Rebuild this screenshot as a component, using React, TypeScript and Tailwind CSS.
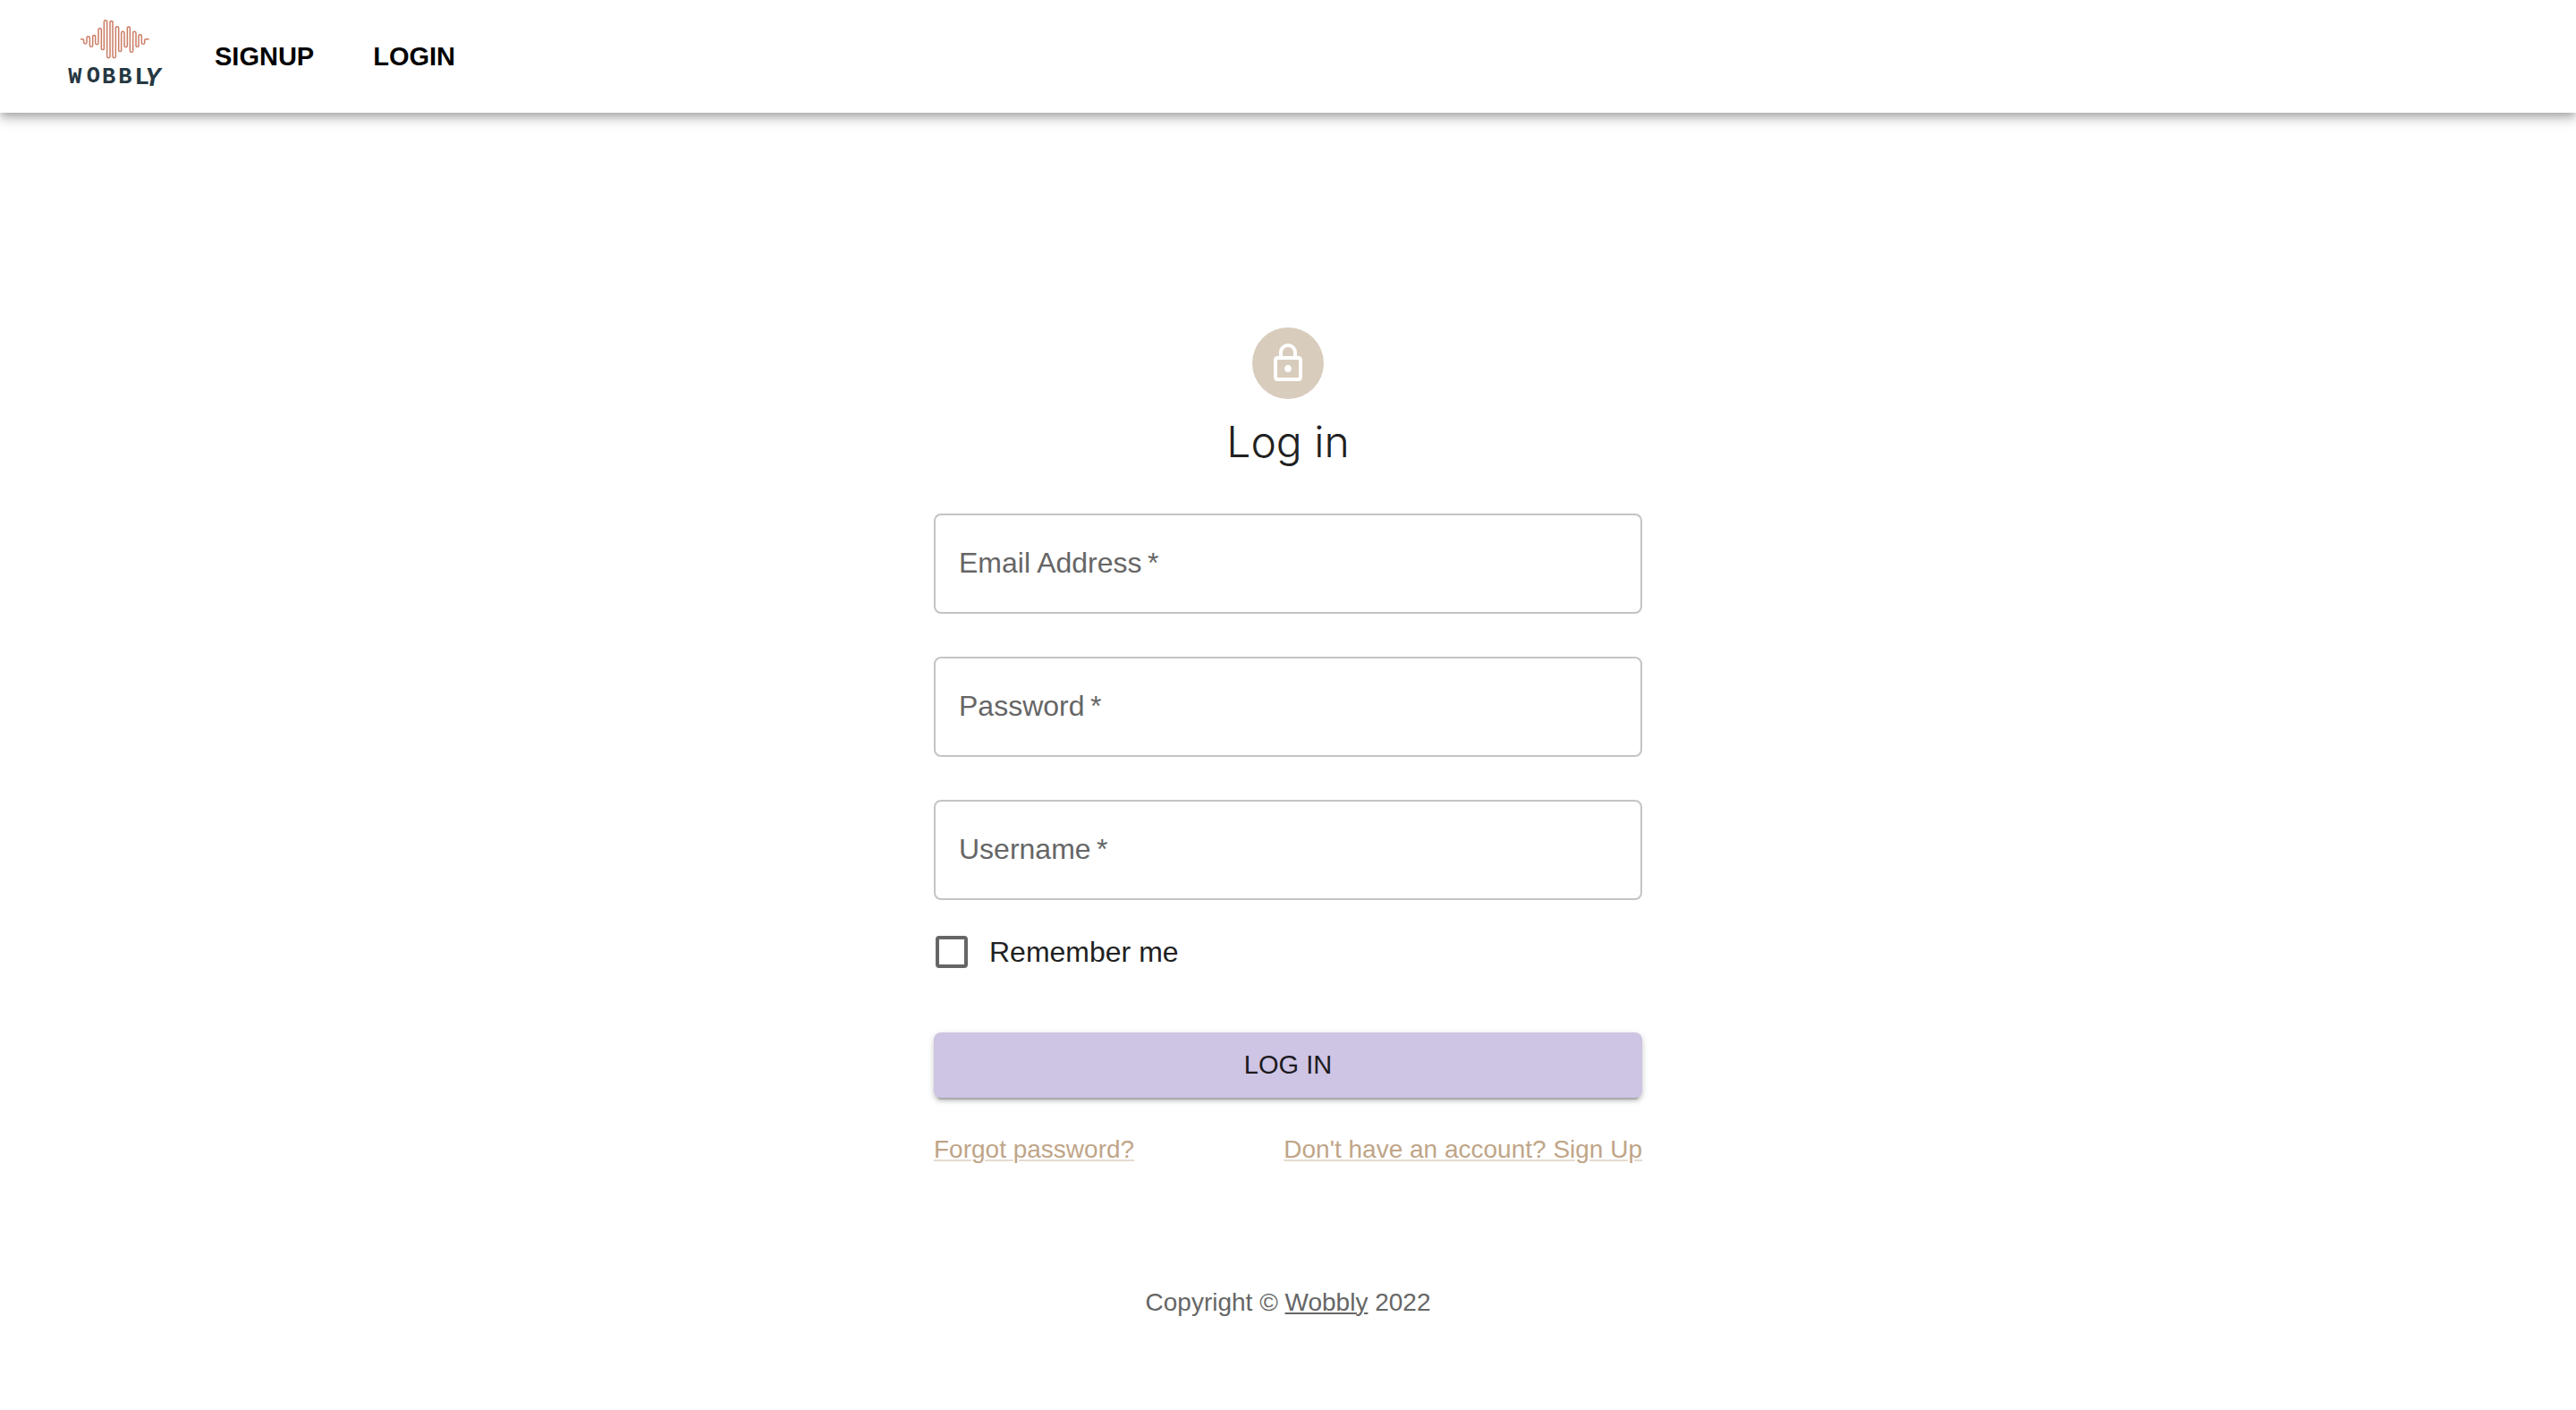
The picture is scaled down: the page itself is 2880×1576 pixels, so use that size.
import { useId } from "react";
import type { ReactNode } from "react";

// Crest and trough heights of the logo's wave, left to right.
const PEAKS = [92, 127, 86, 119, 65, 139, 38, 164, 38, 164, 59, 145, 76, 128, 58, 145, 76, 129, 86, 118];

function wavePath() {
  let d = "M90 101 H97 Q101 101 101 106 V112 A5 5 0 0 0 111 112";
  let x = 111;
  PEAKS.forEach((y, i) => {
    const crest = i % 2 === 0;
    const step = i % 3 === 2 ? 9 : 10;
    d += ` V${crest ? y + 5 : y - 5} a5 5 0 0 ${crest ? 1 : 0} ${step} 0`;
    x += step;
  });
  return d + ` V106 Q${x} 101 ${x + 5} 101 H320`;
}

function Logo() {
  return (
    <svg viewBox="0 -30 420 378" className="h-[126px] w-[140px]" role="img" aria-label="Wobbly">
      <path d={wavePath()} fill="none" stroke="#cb7d65" strokeWidth="4.5" />
      <text
        y="250"
        fontSize="76"
        fill="#263842"
        fontFamily="'Liberation Mono', monospace"
        fontWeight="700"
      >
        <tspan x="49">W</tspan>
        <tspan x="110" y="247">O</tspan>
        <tspan x="162" y="250">B</tspan>
        <tspan x="217">B</tspan>
        <tspan x="271" y="253" fontSize="84">L</tspan>
        <tspan x="307" y="258" fontSize="86" fontStyle="italic">Y</tspan>
      </text>
    </svg>
  );
}

function LockIcon() {
  return (
    <svg viewBox="0 0 24 24" className="size-12 fill-white" aria-hidden="true">
      <path d="M12 17c1.1 0 2-.9 2-2s-.9-2-2-2-2 .9-2 2 .9 2 2 2zm6-9h-1V6c0-2.76-2.24-5-5-5S7 3.24 7 6v2H6c-1.1 0-2 .9-2 2v10c0 1.1.9 2 2 2h12c1.1 0 2-.9 2-2V10c0-1.1-.9-2-2-2zM9 6c0-1.66 1.34-3 3-3s3 1.34 3 3v2H9V6zM18 20H6V10h12v10z" />
    </svg>
  );
}

function Field({ label, type }: { label: string; type: string }) {
  const id = useId();
  return (
    <div className="relative">
      <input
        id={id}
        type={type}
        required
        placeholder=" "
        className="peer block h-28 w-full rounded-lg border-2 border-[#c4c4c4] bg-transparent px-[26px] text-[32px] text-[#212121] outline-none focus:border-[#cfc5e4]"
      />
      <label
        htmlFor={id}
        className="pointer-events-none absolute inset-x-7 top-[33px] text-[32px] leading-11 text-[#666666] peer-focus:hidden peer-[:not(:placeholder-shown)]:hidden"
      >
        {label}&thinsp;*
      </label>
    </div>
  );
}

function TextLink({ children }: { children: ReactNode }) {
  return (
    <a href="#" className="text-[#bfa588] underline decoration-[#e5dbcf] decoration-2 underline-offset-2">
      {children}
    </a>
  );
}

export default function App() {
  return (
    <div className="min-h-screen bg-white font-['Liberation_Sans',Arial,sans-serif] text-[#212121]">
      <header className="flex items-center gap-10 pl-[60px] shadow-[0_4px_8px_-2px_rgba(0,0,0,0.2),0_8px_10px_0_rgba(0,0,0,0.14),0_2px_20px_0_rgba(0,0,0,0.12)]">
        <a href="#"><Logo /></a>
        <nav className="flex gap-[66px] text-[29px] leading-10 font-bold text-black">
          <a href="#">SIGNUP</a>
          <a href="#">LOGIN</a>
        </nav>
      </header>

      <main className="mx-auto flex w-full max-w-[792px] flex-col items-center pt-60">
        <div className="flex size-20 items-center justify-center rounded-full bg-[#d8ccbc]">
          <LockIcon />
        </div>
        <h1 className="mt-4 font-[Inter,sans-serif] text-5xl leading-16 font-light">Log in</h1>

        <form className="mt-12 flex w-full flex-col" onSubmit={(e) => e.preventDefault()}>
          <div className="flex flex-col gap-12">
            <Field label="Email Address" type="email" />
            <Field label="Password" type="password" />
            <Field label="Username" type="text" />
          </div>

          <label className="mt-9 ml-0.5 flex items-center gap-6 self-start text-[32px] leading-11">
            <input
              type="checkbox"
              className="size-9 appearance-none rounded border-4 border-[#666666] checked:bg-[#666666]"
            />
            Remember me
          </label>

          <button
            type="submit"
            className="mt-[68px] h-[73px] rounded-lg bg-[#cec4e4] text-[29px] text-[#1c1a20] shadow-[0_6px_2px_-4px_rgba(0,0,0,0.2),0_4px_4px_0_rgba(0,0,0,0.14),0_2px_10px_0_rgba(0,0,0,0.12)]"
          >
            LOG IN
          </button>

          <div className="mt-[38px] flex justify-between text-[28px] leading-10">
            <TextLink>Forgot password?</TextLink>
            <TextLink>Don't have an account? Sign Up</TextLink>
          </div>
        </form>

        <footer className="mt-[131px] text-[28px] leading-10 text-[#666666]">
          Copyright © <a href="#" className="underline decoration-2 underline-offset-2">Wobbly</a> 2022
        </footer>
      </main>
    </div>
  );
}
